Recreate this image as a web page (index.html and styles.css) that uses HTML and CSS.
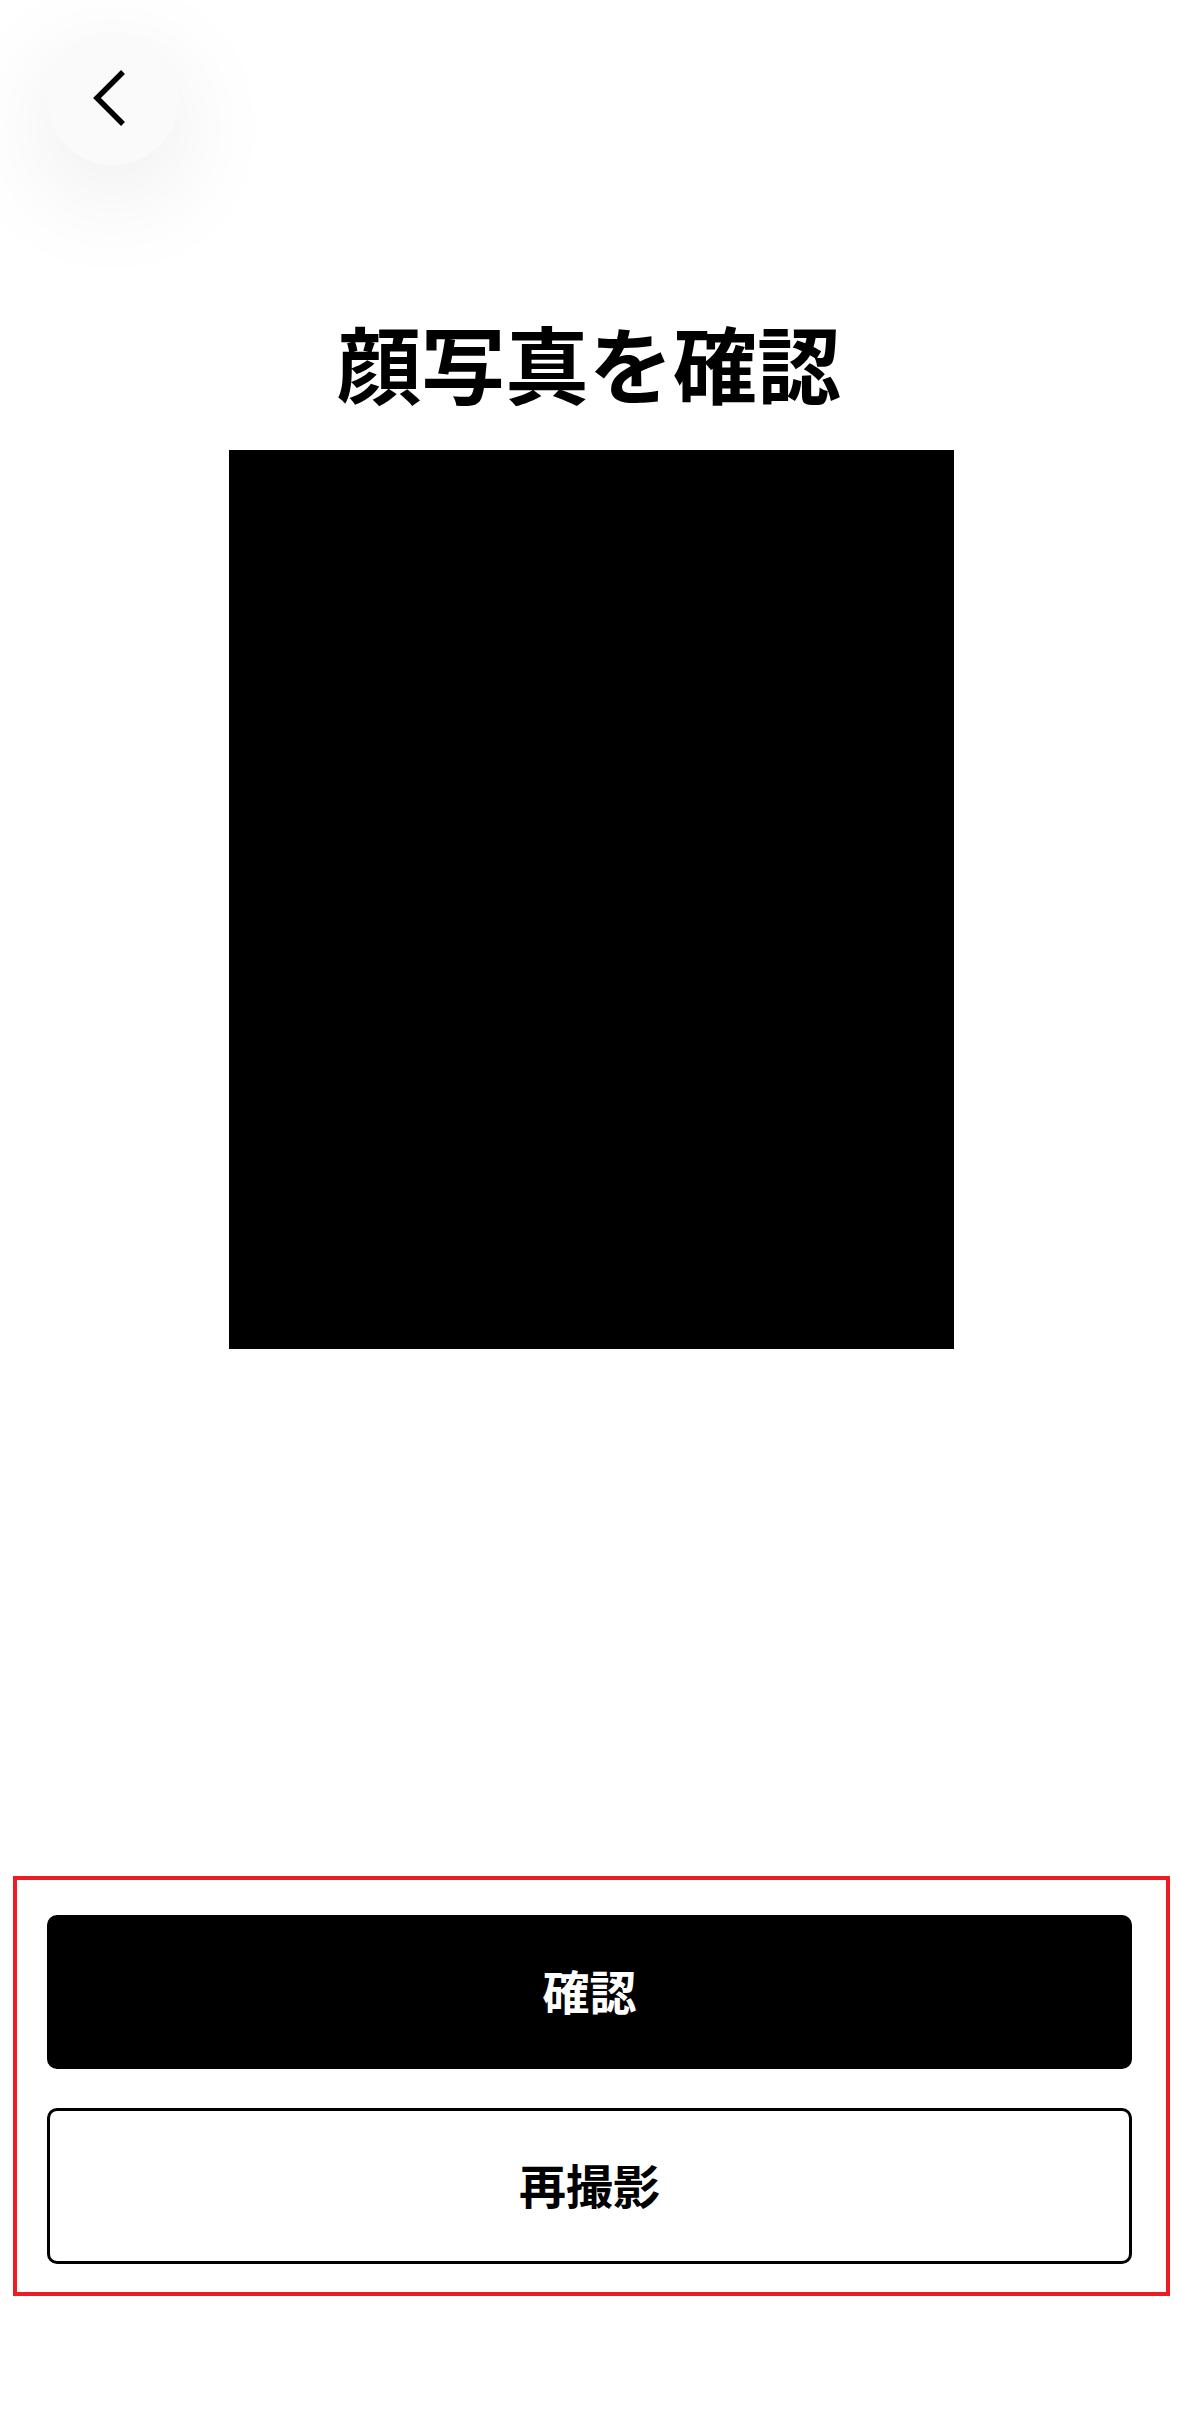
FILE: index.html
```html
<!DOCTYPE html>
<html lang="ja">
<head>
<meta charset="utf-8">
<title>顔写真を確認</title>
<link rel="stylesheet" href="styles.css">
</head>
<body>
<div class="page">
  <header class="top">
    <button class="back" aria-label="戻る">
      <svg width="40" height="60" viewBox="0 0 40 60" aria-hidden="true">
        <path d="M32 3 L6 29 L32 55" fill="none" stroke="#000" stroke-width="5.5" stroke-linecap="butt" stroke-linejoin="miter"/>
      </svg>
    </button>
  </header>
  <main class="content">
    <h1 class="title">顔写真を確認</h1>
    <div class="photo"></div>
  </main>
  <footer class="actions">
    <button class="btn btn-primary">確認</button>
    <button class="btn btn-secondary">再撮影</button>
  </footer>
</div>
</body>
</html>
```
FILE: styles.css
```css
html, body {
  margin: 0;
  padding: 0;
  background: #ffffff;
}
body {
  font-family: "Noto Sans CJK JP", "Noto Sans", sans-serif;
  color: #000;
}
.page {
  width: 1178px;
  min-height: 2413px;
  display: flex;
  flex-direction: column;
}
.top {
  padding: 33px 0 0 47px;
  height: 132px;
}
.back {
  width: 132px;
  height: 132px;
  border-radius: 50%;
  border: none;
  background: #fafafa;
  box-shadow: 0 28px 110px rgba(0, 0, 0, 0.085);
  display: flex;
  align-items: center;
  justify-content: center;
  padding: 0;
  margin: 0;
}
.back svg {
  display: block;
  margin-left: -4px;
}
.content {
  display: flex;
  flex-direction: column;
  align-items: center;
}
.title {
  margin: 155px 0 0 0;
  font-size: 84px;
  line-height: 84px;
  font-weight: 700;
  text-align: center;
}
.photo {
  width: 725px;
  height: 899px;
  background: #000;
  margin: 46px 0 0 4px;
}
.actions {
  margin: 527px 8px 0 13px;
  border: 4.5px solid #ed1c24;
  padding: 35px 34px 28px 30px;
  display: flex;
  flex-direction: column;
  gap: 39px;
}
.btn {
  font-family: "Noto Sans CJK JP", "Noto Sans", sans-serif;
  font-size: 47px;
  font-weight: 700;
  height: 154px;
  border-radius: 10px;
  width: 100%;
  margin: 0;
  padding: 0 0 6px 0;
  cursor: pointer;
}
.btn-primary {
  background: #000;
  color: #fff;
  border: none;
}
.btn-secondary {
  background: #fff;
  color: #000;
  border: 3.5px solid #000;
  height: 156px;
}
```
